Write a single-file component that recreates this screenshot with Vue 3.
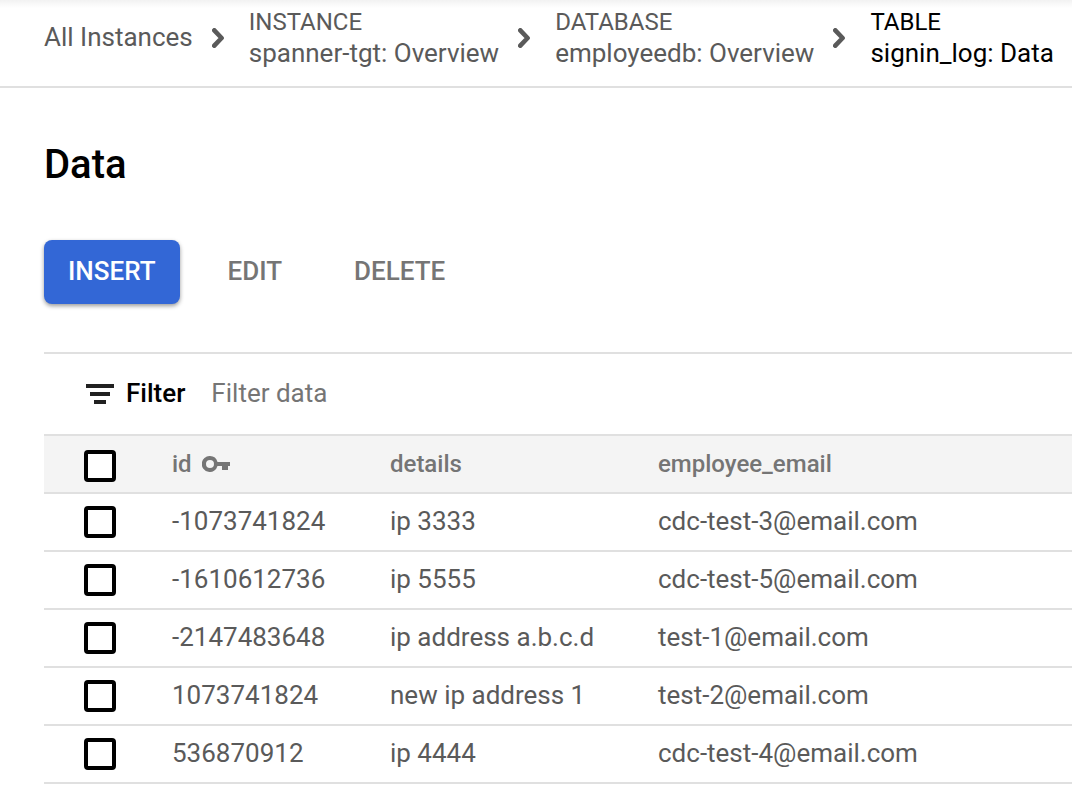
<script setup>
import { ref, computed } from 'vue'

const crumbs = [
  { kind: 'INSTANCE', name: 'spanner-tgt: Overview' },
  { kind: 'DATABASE', name: 'employeedb: Overview' },
  { kind: 'TABLE', name: 'signin_log: Data', current: true },
]

const rows = [
  { id: '-1073741824', details: 'ip 3333', email: 'cdc-test-3@email.com' },
  { id: '-1610612736', details: 'ip 5555', email: 'cdc-test-5@email.com' },
  { id: '-2147483648', details: 'ip address a.b.c.d', email: 'test-1@email.com' },
  { id: '1073741824', details: 'new ip address 1', email: 'test-2@email.com' },
  { id: '536870912', details: 'ip 4444', email: 'cdc-test-4@email.com' },
]

const filterText = ref('')
const selected = ref([])

const visibleRows = computed(() => {
  const q = filterText.value.trim().toLowerCase()
  return rows.filter((r) => !q || `${r.id} ${r.details} ${r.email}`.toLowerCase().includes(q))
})

const allSelected = computed({
  get: () => selected.value.length === rows.length,
  set: (on) => {
    selected.value = on ? rows.map((r) => r.id) : []
  },
})
</script>

<template>
  <div class="page">
    <nav class="crumbs" aria-label="Breadcrumb">
      <a class="crumb" href="#">All Instances</a>
      <template v-for="crumb in crumbs" :key="crumb.kind">
        <svg class="chevron" viewBox="0 0 12 20" aria-hidden="true">
          <path d="M2.3 2.3 9.6 10 2.3 17.7" />
        </svg>
        <a class="crumb" :class="{ current: crumb.current }" href="#">
          <span class="kind">{{ crumb.kind }}</span>
          <span class="name">{{ crumb.name }}</span>
        </a>
      </template>
    </nav>

    <main class="content">
      <h1>Data</h1>

      <div class="actions">
        <button class="btn primary" type="button">INSERT</button>
        <button class="btn" type="button">EDIT</button>
        <button class="btn" type="button">DELETE</button>
      </div>

      <div class="filter">
        <svg class="filter-icon" viewBox="0 0 28 20" aria-hidden="true">
          <path d="M0 0h28v4H0zM4 8h20v4H4zM8 16h12v4H8z" />
        </svg>
        <label for="filter">Filter</label>
        <input id="filter" v-model="filterText" type="text" placeholder="Filter data" />
      </div>

      <table>
        <colgroup>
          <col class="c-check" />
          <col class="c-id" />
          <col class="c-details" />
          <col />
        </colgroup>
        <thead>
          <tr>
            <th class="check">
              <input v-model="allSelected" type="checkbox" aria-label="Select all rows" />
            </th>
            <th scope="col">
              <span class="key-head">
                id
                <svg class="key" viewBox="0 0 28 16" aria-hidden="true">
                  <path
                    fill-rule="evenodd"
                    d="M8 0a8 8 0 0 1 7.5 6H28v4h-2v4h-6v-4h-4.500A8 8 0 1 1 8 0zM8 4a4 4 0 1 0 0 8 4 4 0 0 0 0-8z"
                  />
                </svg>
              </span>
            </th>
            <th scope="col">details</th>
            <th scope="col">employee_email</th>
          </tr>
        </thead>
        <tbody>
          <tr v-for="row in visibleRows" :key="row.id">
            <td class="check">
              <input v-model="selected" type="checkbox" :value="row.id" :aria-label="`Select row ${row.id}`" />
            </td>
            <td>{{ row.id }}</td>
            <td>{{ row.details }}</td>
            <td>{{ row.email }}</td>
          </tr>
        </tbody>
      </table>
    </main>
  </div>
</template>

<style>
body {
  background: #fff;
}
</style>

<style scoped>
.page {
  font-family: Roboto, 'Liberation Sans', sans-serif;
  font-size: 26px;
  line-height: 32px;
  color: #5a5a5a;
}

.crumbs {
  display: flex;
  align-items: center;
  padding: 6px 0 16px 44px;
  border-bottom: 2px solid #e0e0e0;
  background: linear-gradient(#f2f2f2, #fff 8px);
  white-space: nowrap;
}

.crumb {
  padding-bottom: 2px;
  color: inherit;
  text-decoration: none;
}

.crumb.current {
  color: #000;
}

.kind,
.name {
  display: block;
}

.kind {
  font-size: 24px;
}

.name {
  line-height: 30px;
}

.chevron {
  flex: none;
  width: 12px;
  height: 20px;
  margin: 0 25px 0 19px;
  fill: none;
  stroke: #5a5a5a;
  stroke-width: 4.6;
  stroke-linecap: round;
  stroke-linejoin: round;
}

.content {
  padding-left: 44px;
}

h1 {
  margin: 52px 0 0;
  font-size: 40px;
  font-weight: 500;
  line-height: 50px;
  color: #000;
}

.actions {
  display: flex;
  margin: 50px 0 48px;
}

.btn {
  height: 64px;
  margin-right: 24px;
  padding: 0 24px 2px;
  border: 0;
  border-radius: 8px;
  background: none;
  color: #757575;
  font: 500 26px/32px Roboto, 'Liberation Sans', sans-serif;
}

.btn.primary {
  background: #3367d6;
  color: #fff;
  box-shadow: 0 2px 4px rgba(0, 0, 0, 0.4);
}

.filter {
  display: flex;
  align-items: center;
  height: 80px;
  padding-left: 42px;
  border-top: 2px solid #e0e0e0;
}

.filter-icon {
  width: 28px;
  height: 20px;
  margin-right: 12px;
  fill: #212121;
}

.filter label,
.filter input {
  padding: 0 0 2px;
}

.filter label {
  margin-right: 26px;
  font-weight: 500;
  color: #000;
}

.filter input {
  flex: 1;
  min-width: 0;
  border: 0;
  outline: 0;
  background: none;
  color: #000;
  font: inherit;
}

.filter input::placeholder {
  color: #757575;
  opacity: 1;
}

table {
  width: 100%;
  border-spacing: 0;
  border-top: 2px solid #e0e0e0;
  table-layout: fixed;
}

.c-check {
  width: 128px;
}

.c-id {
  width: 218px;
}

.c-details {
  width: 268px;
}

th,
td {
  box-sizing: border-box;
  height: 58px;
  padding: 0;
  border-bottom: 2px solid #e0e0e0;
  text-align: left;
  white-space: nowrap;
}

td {
  padding-bottom: 2px;
}

th {
  background: #f4f4f4;
  color: #757575;
  font-size: 24px;
  font-weight: 500;
}

.check {
  padding: 0 0 0 40px;
}

th.check {
  padding-top: 4px;
}

.check input {
  display: block;
  appearance: none;
  width: 32px;
  height: 32px;
  margin: 0;
  border: 4px solid #000;
  border-radius: 4px;
  background: #fff;
}

.check input:checked {
  background: #3367d6;
}

.key-head {
  display: flex;
  align-items: center;
  gap: 10px;
}

.key {
  width: 28px;
  height: 16px;
  fill: #757575;
}
</style>
